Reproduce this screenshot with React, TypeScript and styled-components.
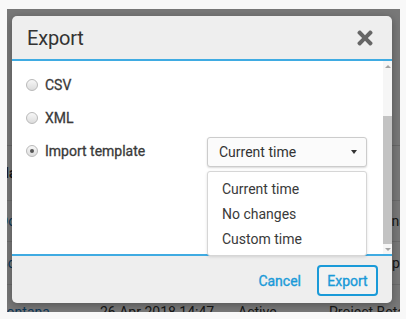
import React from "react";
import styled, { createGlobalStyle } from "styled-components";
import { FaTimes } from "react-icons/fa";

const GlobalStyle = createGlobalStyle`
  html, body { margin: 0; padding: 0; }
  body {
    background: #f8f8f8;
    font-family: Roboto, "Liberation Sans", Arial, sans-serif;
    -webkit-font-smoothing: antialiased;
  }
`;

const Page = styled.div`
  padding: 9px 6px 0 7px;
  width: 406px;
  height: 319px;
  box-sizing: border-box;
`;

const Viewport = styled.div`
  position: relative;
  width: 393px;
  height: 303px;
  overflow: hidden;
  background: #ffffff;
`;

const AppTable = styled.div`
  display: flex;
  flex-direction: column;
  margin-left: -8px;
  width: 420px;
`;

const Toolbar = styled.div`
  height: 136px;
  border-bottom: 1px solid #dddddd;
`;

const TableRow = styled.div<{ $h: number }>`
  height: ${(p) => p.$h}px;
  display: grid;
  grid-template-columns: 101px 138px 91px 1fr;
  align-items: center;
  border-bottom: 1px solid #e3e3e3;
  font-size: 14px;
  color: #333;
  white-space: nowrap;
`;

const Cell = styled.div<{ $link?: boolean; $bold?: boolean }>`
  color: ${(p) => (p.$link ? "#1b75bb" : "#333")};
  font-weight: ${(p) => (p.$bold ? 700 : 400)};
  overflow: hidden;
`;

const Backdrop = styled.div`
  position: absolute;
  inset: 0;
  background: rgba(0, 0, 0, 0.53);
`;

const Dialog = styled.div`
  position: absolute;
  left: 5px;
  top: 7px;
  width: 380px;
  height: 287px;
  border-radius: 5px;
  display: flex;
  flex-direction: column;
  box-shadow: 0 2px 8px rgba(0, 0, 0, 0.3);
`;

const Header = styled.div`
  height: 43px;
  flex: none;
  background: #eeeeee;
  border-bottom: 2px solid #3fabe2;
  border-radius: 5px 5px 0 0;
  display: flex;
  align-items: center;
  justify-content: space-between;
  padding: 0 16px 0 15px;
`;

const Title = styled.h2`
  margin: 0;
  font-size: 20px;
  font-weight: 400;
  color: #333;
  letter-spacing: -0.2px;
`;

const CloseButton = styled.button`
  border: 0;
  background: none;
  padding: 0;
  display: flex;
  color: #666;
  cursor: pointer;
`;

const Body = styled.div`
  flex: 1;
  display: flex;
  background: #ffffff;
  min-height: 0;
`;

const Content = styled.div`
  flex: 1;
  padding: 7px 16px 0 14px;
  display: flex;
  flex-direction: column;
`;

const OptionRow = styled.label`
  height: 33px;
  display: flex;
  align-items: center;
  gap: 7px;
  font-size: 14px;
  font-weight: 400;
  -webkit-text-stroke: 0.3px #3a3a3a;
  color: #3a3a3a;
  position: relative;
`;

const Radio = styled.span<{ $checked?: boolean }>`
  width: 10px;
  height: 10px;
  border-radius: 50%;
  border: 1px solid #b9b9b9;
  background: linear-gradient(#f7f7f7, #dcdcdc);
  display: flex;
  align-items: center;
  justify-content: center;
  flex: none;
  &::after {
    content: "";
    width: 4px;
    height: 4px;
    border-radius: 50%;
    background: #555;
    display: ${(p) => (p.$checked ? "block" : "none")};
  }
`;

const SelectWrap = styled.div`
  margin-left: auto;
  margin-top: 3px;
  position: relative;
  width: 160px;
  -webkit-text-stroke: 0;
`;

const SelectBox = styled.div`
  height: 30px;
  box-sizing: border-box;
  border: 1px solid #cccccc;
  border-radius: 3px;
  background: #fbfbfb;
  box-shadow: 0 1px 2px rgba(0, 0, 0, 0.15);
  display: flex;
  align-items: center;
  justify-content: space-between;
  padding: 0 9px 0 11px;
  font-size: 14px;
  font-weight: 400;
  color: #333;
`;

const Caret = styled.span`
  width: 0;
  height: 0;
  border-left: 3.5px solid transparent;
  border-right: 3.5px solid transparent;
  border-top: 4px solid #333;
`;

const Menu = styled.ul`
  position: absolute;
  top: 34px;
  left: 0;
  width: 160px;
  box-sizing: border-box;
  margin: 0;
  padding: 4px 0;
  list-style: none;
  background: #ffffff;
  border: 1px solid #d6d6d6;
  border-radius: 3px;
  box-shadow: 0 1px 3px rgba(0, 0, 0, 0.12);
  z-index: 2;
`;

const MenuItem = styled.li`
  height: 25px;
  display: flex;
  align-items: center;
  padding-left: 14px;
  font-size: 14px;
  font-weight: 400;
  color: #3a3a3a;
`;

const Scrollbar = styled.div`
  width: 9px;
  flex: none;
  background: #f6f6f6;
  display: flex;
  flex-direction: column;
  align-items: center;
`;

const Arrow = styled.span<{ $down?: boolean }>`
  height: 11px;
  display: flex;
  align-items: center;
  &::before {
    content: "";
    border-left: 3px solid transparent;
    border-right: 3px solid transparent;
    ${(p) => (p.$down ? "border-top" : "border-bottom")}: 3px solid #a3a3a3;
  }
`;

const Track = styled.div`
  flex: 1;
  width: 100%;
  display: flex;
  flex-direction: column;
`;

const Thumb = styled.div<{ $top: number; $h: number }>`
  margin-top: ${(p) => p.$top}px;
  height: ${(p) => p.$h}px;
  background: #c3c3c3;
`;

const Footer = styled.div`
  height: 45px;
  flex: none;
  background: #eeeeee;
  border-top: 2px solid #3fabe2;
  border-radius: 0 0 5px 5px;
  display: flex;
  align-items: center;
  justify-content: flex-end;
  gap: 16px;
  padding: 2px 14px 0 0;
  box-sizing: content-box;
`;

const TextButton = styled.button`
  border: 0;
  background: none;
  padding: 0;
  font-family: inherit;
  font-size: 14px;
  font-weight: 400;
  -webkit-text-stroke: 0.35px #1a9ad8;
  color: #1a9ad8;
  cursor: pointer;
`;

const OutlineButton = styled(TextButton)`
  width: 61px;
  height: 31px;
  border: 2px solid #1a9ad8;
  border-radius: 4px;
  background: #f2f2f2;
`;

export default function App() {
  return (
    <>
      <GlobalStyle />
      <Page>
        <Viewport>
          <AppTable>
            <Toolbar />
            <TableRow $h={54}>
              <Cell $bold>Name</Cell>
              <Cell $bold>Created</Cell>
              <Cell $bold>Status</Cell>
              <Cell $bold>Project</Cell>
            </TableRow>
            <TableRow $h={40}>
              <Cell $link>Doris Lopez</Cell>
              <Cell>25 Apr 2018 09:12</Cell>
              <Cell>Active</Cell>
              <Cell>Project Luna</Cell>
            </TableRow>
            <TableRow $h={42}>
              <Cell $link>Borah</Cell>
              <Cell>25 Apr 2018 16:30</Cell>
              <Cell>Active</Cell>
              <Cell>Project Jupiter</Cell>
            </TableRow>
            <TableRow $h={54}>
              <Cell $link>Fontana</Cell>
              <Cell>26 Apr 2018 14:47</Cell>
              <Cell>Active</Cell>
              <Cell>Project Beta</Cell>
            </TableRow>
          </AppTable>
          <Backdrop />
          <Dialog>
            <Header>
              <Title>Export</Title>
              <CloseButton aria-label="Close">
                <FaTimes size={22} />
              </CloseButton>
            </Header>
            <Body>
              <Content>
                <OptionRow>
                  <Radio />
                  CSV
                </OptionRow>
                <OptionRow>
                  <Radio />
                  XML
                </OptionRow>
                <OptionRow>
                  <Radio $checked />
                  Import template
                  <SelectWrap>
                    <SelectBox>
                      Current time
                      <Caret />
                    </SelectBox>
                    <Menu>
                      <MenuItem>Current time</MenuItem>
                      <MenuItem>No changes</MenuItem>
                      <MenuItem>Custom time</MenuItem>
                    </Menu>
                  </SelectWrap>
                </OptionRow>
              </Content>
              <Scrollbar>
                <Arrow />
                <Track>
                  <Thumb $top={45} $h={128} />
                </Track>
                <Arrow $down />
              </Scrollbar>
            </Body>
            <Footer>
              <TextButton>Cancel</TextButton>
              <OutlineButton>Export</OutlineButton>
            </Footer>
          </Dialog>
        </Viewport>
      </Page>
    </>
  );
}
